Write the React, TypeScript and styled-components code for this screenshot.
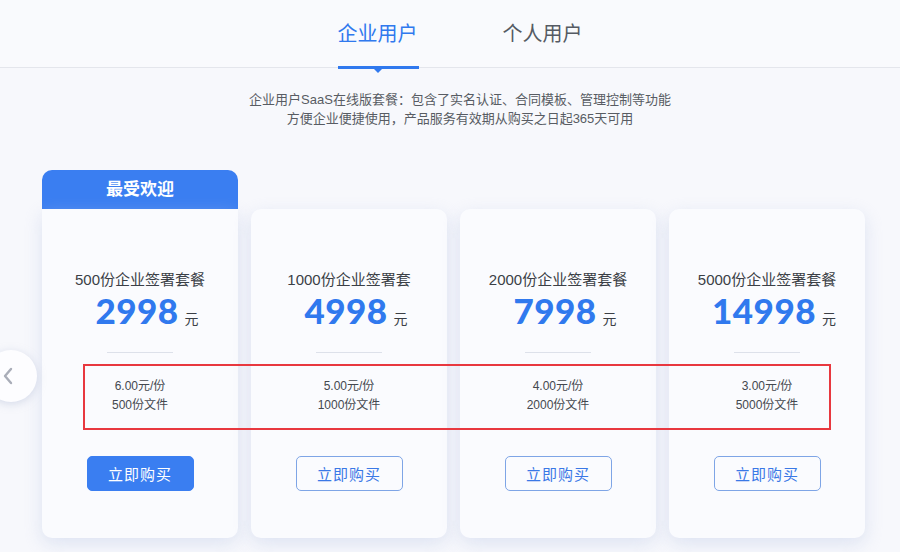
import React from 'react'
import styled, { createGlobalStyle, css } from 'styled-components'

const BLUE = '#3079ee'

const GlobalStyle = createGlobalStyle`
  html, body {
    margin: 0;
    padding: 0;
    background: #f7f8fc;
    font-family: 'Liberation Sans', 'Noto Sans CJK SC', sans-serif;
    overflow: hidden;
  }
`

const Page = styled.div`
  width: 900px;
  height: 552px;
  position: relative;
  overflow: hidden;
  background: #f7f8fc;
`

const Header = styled.header`
  height: 67px;
  background: #f9fafd;
  border-bottom: 1px solid #e4e6ec;
  display: flex;
  justify-content: center;
  padding-left: 20px;
  gap: 85px;
`

const Tab = styled.div<{ $active?: boolean }>`
  position: relative;
  width: 80px;
  font-size: 20px;
  line-height: 69px;
  text-align: center;
  color: ${({ $active }) => ($active ? BLUE : '#555a63')};

  ${({ $active }) =>
    $active &&
    css`
      &::after {
        content: '';
        position: absolute;
        left: 0;
        right: -1px;
        bottom: -2px;
        height: 3px;
        background: ${BLUE};
      }
      &::before {
        content: '';
        position: absolute;
        left: 50%;
        bottom: -6px;
        margin-left: -5px;
        border-left: 5px solid transparent;
        border-right: 5px solid transparent;
        border-top: 5px solid ${BLUE};
      }
    `}
`

const Intro = styled.p`
  margin: 22px 0 0;
  padding-left: 20px;
  text-align: center;
  font-size: 13px;
  line-height: 19px;
  color: #585c63;
`

const CardRow = styled.div`
  display: flex;
  align-items: flex-end;
  gap: 13px;
  padding-left: 42px;
  margin-top: 42px;
`

const CardWrap = styled.div`
  width: 196px;
  display: flex;
  flex-direction: column;
`

const Banner = styled.div`
  height: 39px;
  background: #3a7ef1;
  border-radius: 10px 10px 0 0;
  color: #fff;
  font-size: 17px;
  font-weight: 600;
  line-height: 40px;
  text-align: center;
`

const Card = styled.div<{ $popular?: boolean }>`
  height: 329px;
  background: #fafbfe;
  border-radius: ${({ $popular }) => ($popular ? '0 0 10px 10px' : '10px')};
  box-shadow: 0 6px 18px rgba(190, 202, 230, 0.45);
  display: flex;
  flex-direction: column;
  align-items: center;
  padding-top: 61px;
  box-sizing: border-box;
`

const Title = styled.div`
  font-size: 15px;
  line-height: 20px;
  color: #3b3f46;
  white-space: nowrap;
`

const PriceRow = styled.div`
  display: flex;
  align-items: baseline;
  gap: 6px;
  padding-left: 14px;
  margin-top: 1px;
`

const Amount = styled.span`
  font-family: 'Lato', 'Liberation Sans', sans-serif;
  font-weight: 900;
  font-size: 35px;
  line-height: 38px;
  color: ${BLUE};
  letter-spacing: 0.5px;
`

const Unit = styled.span`
  font-size: 14px;
  color: #3b3f46;
`

const Divider = styled.div`
  width: 66px;
  height: 1px;
  background: #dde1ea;
  margin-top: 23px;
`

const Detail = styled.div`
  margin-top: 24px;
  font-size: 12px;
  line-height: 19px;
  color: #44484f;
  text-align: center;
`

const BuyButton = styled.button<{ $filled?: boolean }>`
  margin-top: 41px;
  width: 107px;
  height: 35px;
  border-radius: 5px;
  font-family: 'Liberation Sans', 'Noto Sans CJK SC', sans-serif;
  font-size: 15px;
  letter-spacing: 1px;
  cursor: pointer;
  border: 1px solid ${({ $filled }) => ($filled ? '#3a7ef1' : '#7ea5e6')};
  background: ${({ $filled }) => ($filled ? '#3a7ef1' : 'transparent')};
  color: ${({ $filled }) => ($filled ? '#fff' : '#3a78e6')};
`

const Highlight = styled.div`
  position: absolute;
  left: 83px;
  top: 364px;
  width: 748px;
  height: 66px;
  box-sizing: border-box;
  border: 2px solid #e8383f;
  pointer-events: none;
`

const PrevArrow = styled.button`
  position: absolute;
  left: -15px;
  top: 350px;
  width: 52px;
  height: 52px;
  border-radius: 50%;
  border: none;
  background: #fdfdff;
  box-shadow: 0 2px 8px rgba(180, 190, 215, 0.5);
  display: flex;
  align-items: center;
  justify-content: flex-end;
  padding: 0 23px 0 0;
  cursor: pointer;

  svg {
    width: 12px;
    height: 18px;
  }
`

type Plan = {
  title: string
  price: string
  perUnit: string
  files: string
  popular?: boolean
}

const plans: Plan[] = [
  { title: '500份企业签署套餐', price: '2998', perUnit: '6.00元/份', files: '500份文件', popular: true },
  { title: '1000份企业签署套', price: '4998', perUnit: '5.00元/份', files: '1000份文件' },
  { title: '2000份企业签署套餐', price: '7998', perUnit: '4.00元/份', files: '2000份文件' },
  { title: '5000份企业签署套餐', price: '14998', perUnit: '3.00元/份', files: '5000份文件' },
]

const App = () => (
  <Page>
    <GlobalStyle />
    <Header>
      <Tab $active>企业用户</Tab>
      <Tab>个人用户</Tab>
    </Header>
    <Intro>
      企业用户SaaS在线版套餐：包含了实名认证、合同模板、管理控制等功能
      <br />
      方便企业便捷使用，产品服务有效期从购买之日起365天可用
    </Intro>
    <CardRow>
      {plans.map((p) => (
        <CardWrap key={p.price}>
          {p.popular && <Banner>最受欢迎</Banner>}
          <Card $popular={p.popular}>
            <Title>{p.title}</Title>
            <PriceRow>
              <Amount>{p.price}</Amount>
              <Unit>元</Unit>
            </PriceRow>
            <Divider />
            <Detail>
              {p.perUnit}
              <br />
              {p.files}
            </Detail>
            <BuyButton $filled={p.popular}>立即购买</BuyButton>
          </Card>
        </CardWrap>
      ))}
    </CardRow>
    <Highlight />
    <PrevArrow aria-label="previous">
      <svg viewBox="0 0 12 18" fill="none" stroke="#a9adb8" strokeWidth="2.4" strokeLinecap="round" strokeLinejoin="round">
        <polyline points="9,2 3,9 9,16" />
      </svg>
    </PrevArrow>
  </Page>
)

export default App
